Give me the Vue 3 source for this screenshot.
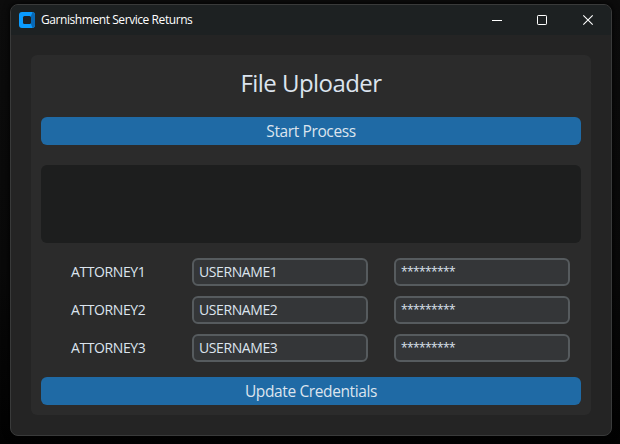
<script setup>
import { ref } from 'vue'

const accounts = ref([
  { attorney: 'ATTORNEY1', username: 'USERNAME1', password: '*********' },
  { attorney: 'ATTORNEY2', username: 'USERNAME2', password: '*********' },
  { attorney: 'ATTORNEY3', username: 'USERNAME3', password: '*********' },
])
</script>

<template>
  <div class="desktop">
    <main class="window">
      <header class="titlebar">
        <svg class="logo" width="16" height="16" viewBox="0 0 16 16">
          <rect width="16" height="16" rx="3" fill="#0a9bff" />
          <path d="M12 4l1.500-3.900A3 3 0 0 1 16 3v10a3 3 0 0 1-2.500 2.900L12 12z" fill="#0868b5" />
          <rect x="4" y="4" width="8" height="8" rx="1.5" fill="#1d2023" />
        </svg>
        <span class="caption">Garnishment Service Returns</span>
        <svg class="controls" width="104" height="12" viewBox="0 0 104 12" fill="none" stroke="#fff">
          <path d="M0 6.500h10" />
          <rect x="45.5" y="1.5" width="9" height="9" rx=".7" />
          <path d="M91.300 1.300l9.400 9.400M100.700 1.300l-9.400 9.400" stroke-width="1.1" />
        </svg>
      </header>
      <section class="panel">
        <h1>File Uploader</h1>
        <button class="start"><span>Start Process</span></button>
        <div class="log"></div>
        <div class="accounts">
          <div v-for="a in accounts" :key="a.attorney" class="row">
            <label><span>{{ a.attorney }}</span></label>
            <div class="entry user"><span>{{ a.username }}</span></div>
            <div class="entry pass"><span>{{ a.password }}</span></div>
          </div>
        </div>
        <button class="update"><span>Update Credentials</span></button>
      </section>
    </main>
  </div>
</template>

<style>
body { margin: 0; background: #070707; }
</style>

<style scoped>
* { box-sizing: border-box; }
.desktop {
  width: 620px;
  height: 444px;
  padding: 4px 8px 8px 10px;
  overflow: hidden;
  background: linear-gradient(#0c0c0c, #090909 60%, #020202);
  font-family: "Open Sans", "Noto Sans", sans-serif;
  color: #dce4ee;
}
.window {
  width: 602px;
  height: 432px;
  border: 1px solid #393a3a;
  border-radius: 8px;
  background: #242424;
  overflow: hidden;
  box-shadow: 0 0 7px #000;
}
.titlebar {
  display: flex;
  align-items: center;
  height: 30px;
  padding: 0 15px 0 8px;
  background: #1d2122;
  color: #fff;
}
.caption {
  margin-left: 6px;
  font-size: 12px;
  line-height: 16px;
  letter-spacing: -0.43px;
  white-space: nowrap;
}
.controls { margin-left: auto; }
.panel {
  width: 560px;
  height: 360px;
  margin: 20px 0 0 20px;
  padding: 10px;
  border-radius: 6px;
  background: #2b2b2b;
}
h1 {
  margin: 0;
  height: 52px;
  font-size: 24px;
  font-weight: 400;
  line-height: 36px;
  letter-spacing: -0.55px;
  text-align: center;
}
button {
  display: block;
  width: 540px;
  height: 28px;
  padding: 0;
  border: 0;
  border-radius: 6px;
  background: #1f6aa5;
  color: #dce4ee;
  font-family: inherit;
  font-size: 15.5px;
  line-height: 28px;
  letter-spacing: -0.38px;
  text-align: center;
}
.log {
  height: 78px;
  margin-top: 20px;
  border-radius: 6px;
  background: #1d1e1e;
}
.accounts {
  display: grid;
  gap: 10px;
  margin: 15px 0;
  padding-left: 30px;
}
.row {
  display: grid;
  grid-template-columns: 121px 176px 176px;
  height: 28px;
  font-size: 14px;
  line-height: 28px;
  letter-spacing: -0.4px;
}
.entry {
  height: 28px;
  padding-left: 5px;
  border: 2px solid #565b5e;
  border-radius: 6px;
  background: #343638;
  line-height: 24px;
}
.pass {
  width: 176px;
  margin-left: 26px;
  font-size: 12px;
  line-height: 24px;
  letter-spacing: -0.6px;
}
</style>
